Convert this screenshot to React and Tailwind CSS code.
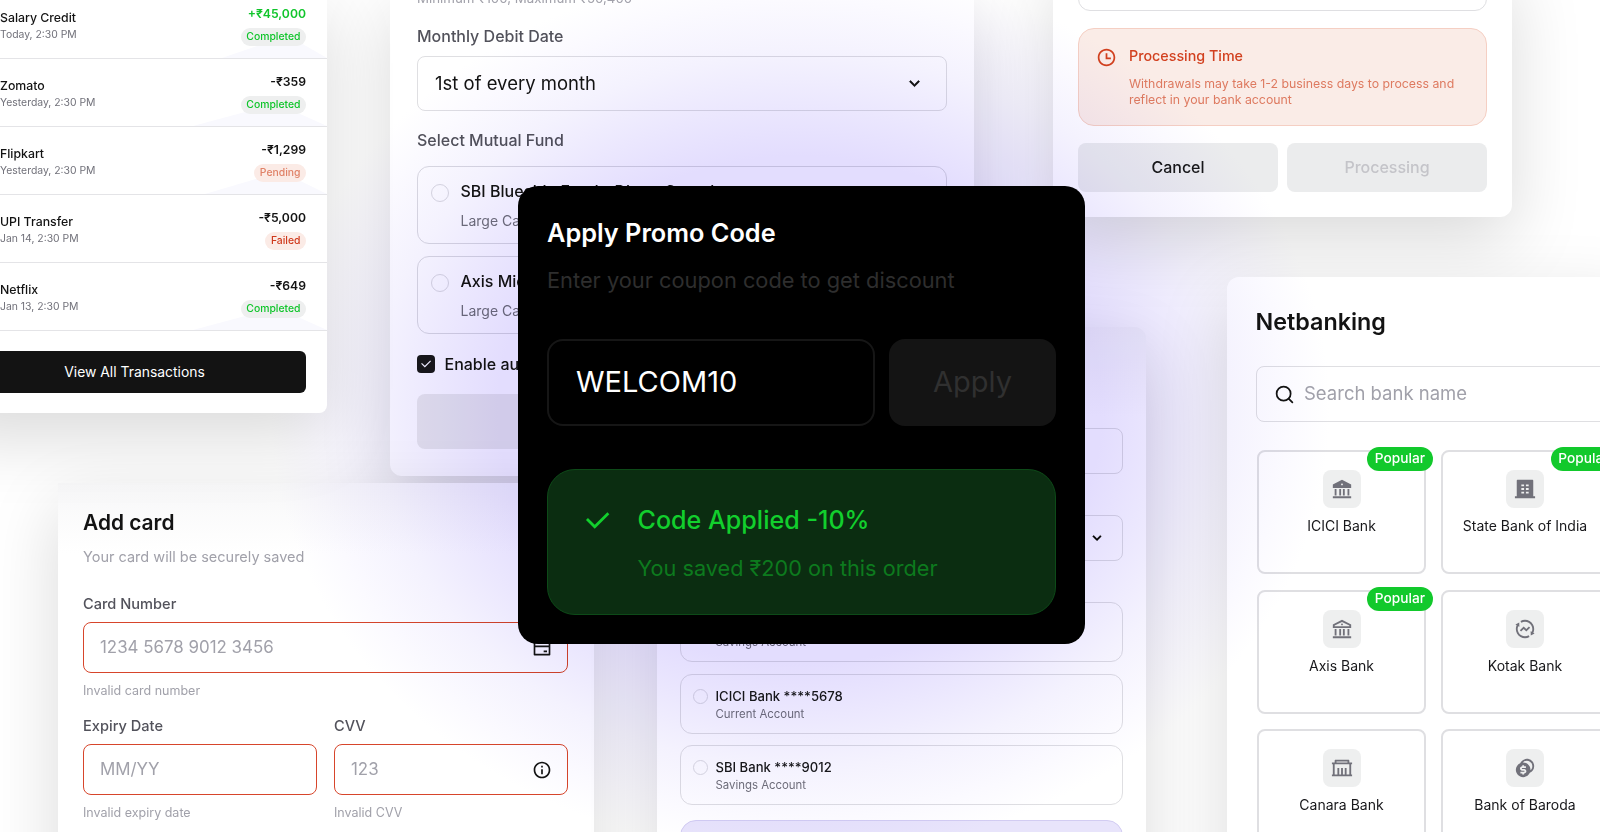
import clsx from 'clsx';
import {
  RiArrowDownSLine,
  RiBankCardLine,
  RiBankFill,
  RiBankLine,
  RiBuilding4Fill,
  RiCheckLine,
  RiCoinsFill,
  RiExchangeFundsLine,
  RiGovernmentLine,
  RiInformationLine,
  RiTimeLine,
} from 'react-icons/ri';
import { Search } from 'lucide-react';

const CARD = 'absolute bg-white shadow-[0_24px_70px_rgba(0,0,0,0.15)]';

const BADGES = {
  Completed: 'bg-[#eeefef] text-[#10c52b]',
  Pending: 'bg-[#fbebe6] text-[#e08268]',
  Failed: 'bg-[#fbebe6] text-[#cf3a1d]',
};

const TRANSACTIONS = [
  { name: 'Salary Credit', date: 'Today, 2:30 PM', amount: '+₹45,000', status: 'Completed', tint: 'w-[105px]' },
  { name: 'Zomato', date: 'Yesterday, 2:30 PM', amount: '-₹359', status: 'Completed', tint: 'w-[134px]' },
  { name: 'Flipkart', date: 'Yesterday, 2:30 PM', amount: '-₹1,299', status: 'Pending', tint: 'w-[122px]' },
  { name: 'UPI Transfer', date: 'Jan 14, 2:30 PM', amount: '-₹5,000', status: 'Failed' },
  { name: 'Netflix', date: 'Jan 13, 2:30 PM', amount: '-₹649', status: 'Completed', tint: 'w-[134px]' },
];

const FUNDS = [
  { name: 'SBI Bluechip Fund - Direct Growth', type: 'Large Cap' },
  { name: 'Axis Midcap Fund - Direct Growth', type: 'Large Cap' },
];

const ACCOUNTS = [
  { name: 'HDFC Bank ****1234', type: 'Savings Account' },
  { name: 'ICICI Bank ****5678', type: 'Current Account' },
  { name: 'SBI Bank ****9012', type: 'Savings Account' },
];

const BANKS = [
  { name: 'ICICI Bank', icon: RiBankFill, popular: true },
  { name: 'State Bank of India', icon: RiBuilding4Fill, popular: true },
  { name: 'Axis Bank', icon: RiBankLine, popular: true },
  { name: 'Kotak Bank', icon: RiExchangeFundsLine },
  { name: 'Canara Bank', icon: RiGovernmentLine },
  { name: 'Bank of Baroda', icon: RiCoinsFill },
];

function TransactionsCard() {
  return (
    <section className={clsx(CARD, 'left-[-58px] top-[-9px] w-[385px] rounded-lg pb-5')}>
      {TRANSACTIONS.map((t) => (
        <div key={t.name} className="relative flex h-[68px] justify-between border-b border-[#e4e4e7] pl-[58px] pr-[21px]">
          {t.tint && (
            <div
              className={clsx(
                'absolute bottom-0 right-0 h-[18px] bg-[#f9f9fe] [clip-path:polygon(0_100%,50%_0,70%_0,100%_100%)]',
                t.tint
              )}
            />
          )}
          <div className="pt-[19px]">
            <p className="text-[12.3px] font-medium leading-4 text-[#131313]">{t.name}</p>
            <p className="mt-px text-[10.4px] leading-4 text-[#71717a]">{t.date}</p>
          </div>
          <div className="relative flex flex-col items-end pt-[15px]">
            <p
              className={clsx(
                'text-[12.2px] font-semibold leading-4',
                t.amount.startsWith('+') ? 'text-[#10c52b]' : 'text-[#131313]'
              )}
            >
              {t.amount}
            </p>
            <span
              className={clsx(
                'mt-[6px] flex h-[17.5px] items-center rounded-full px-[5.5px] text-[10.4px] font-medium',
                BADGES[t.status]
              )}
            >
              {t.status}
            </span>
          </div>
        </div>
      ))}
      <div className="pl-[21px] pr-[21px] pt-5">
        <button className="h-[42px] w-full rounded-md bg-[#131313] text-[13.9px] text-white">View All Transactions</button>
      </div>
    </section>
  );
}

function SipCard() {
  return (
    <section className={clsx(CARD, 'left-[390px] top-[-12px] w-[584px] rounded-xl px-[27px] pb-[27px] text-[#131313]')}>
      <p className="text-[13.3px] leading-5 text-[#a1a1aa]">Minimum ₹100, Maximum ₹50,400</p>
      <p className="mt-[18px] text-[16px] font-medium leading-5 text-[#52525b]">Monthly Debit Date</p>
      <div className="mt-[10px] flex h-[55px] items-center justify-between rounded-lg border border-[#dfdfe2] pl-[17px] pr-[22px] text-[18.5px]">
        1st of every month
        <RiArrowDownSLine className="size-[19px]" stroke="currentColor" strokeWidth="0.8" />
      </div>
      <p className="mt-[19px] text-[16px] font-medium leading-5 text-[#52525b]">Select Mutual Fund</p>
      <div className="mt-4 flex flex-col gap-3">
        {FUNDS.map((f) => (
          <div key={f.name} className="flex h-[78px] gap-[11.5px] rounded-xl border border-[#dbdbe0] pl-[13px] pt-[14px]">
            <span className="mt-[3px] size-[18px] rounded-full border border-[#dbdbe0]" />
            <div>
              <p className="text-[16px] font-medium leading-5">{f.name}</p>
              <p className="mt-[10px] text-[14px] leading-5 text-[#71717a]">{f.type}</p>
            </div>
          </div>
        ))}
      </div>
      <div className="mt-5 flex h-5 items-center gap-[9.5px]">
        <span className="flex size-[18px] items-center justify-center rounded bg-[#18181b]">
          <RiCheckLine className="size-[14px] text-white" />
        </span>
        <p className="text-[16px] font-medium">Enable auto-debit</p>
      </div>
      <div className="mt-5 h-[55px] rounded-lg bg-[#ebebeb]" />
    </section>
  );
}

function WithdrawCard() {
  return (
    <section className={clsx(CARD, 'left-[1053px] top-[-40px] w-[459px] rounded-xl px-[25px] pb-[25px]')}>
      <div className="h-[51px] rounded-xl border border-[#dfdfe2]" />
      <div className="mt-[17px] flex h-[98px] gap-[12px] rounded-2xl border border-[#f5cfc3] bg-[#faece7] pl-[17px] pt-[17px]">
        <RiTimeLine className="mt-px size-[21px] shrink-0 text-[#d2401f]" />
        <div>
          <p className="text-[14.3px] font-medium leading-5 text-[#d2401f]">Processing Time</p>
          <p className="mt-[10px] w-[340px] text-[12.3px] leading-4 text-[#de7a60]">
            Withdrawals may take 1-2 business days to process and reflect in your bank account
          </p>
        </div>
      </div>
      <div className="mt-[17px] grid grid-cols-2 gap-[9px] text-[16px] font-medium">
        <button className="h-[49px] rounded-lg bg-[#ebeced] pb-[2px] text-[#18181b]">Cancel</button>
        <button className="h-[49px] rounded-lg bg-[#ebeced] pb-[2px] text-[#c4c4c9]">Processing</button>
      </div>
    </section>
  );
}

function CardField({ label, placeholder, error, icon: Icon }) {
  return (
    <div>
      <p className="text-[14.6px] font-medium leading-5 text-[#52525b]">{label}</p>
      <div className="mt-[8px] flex h-[51px] items-center justify-between rounded-lg border border-[#d7452b] pl-4 pr-[15px] pt-px text-[16.9px] text-[#a1a1aa]">
        {placeholder}
        {Icon && <Icon className="size-5 text-[#131313]" />}
      </div>
      <p className="mt-[8px] text-[12.5px] leading-5 text-[#a1a1aa]">{error}</p>
    </div>
  );
}

function AddCard() {
  return (
    <section
      className={clsx(
        CARD,
        'left-[58px] top-[483px] h-[420px] w-[536px] rounded-tr-xl bg-[linear-gradient(#f7f7f8,#ffffff_70px)] pl-[25px] pr-[26px] pt-[26px]'
      )}
    >
      <h2 className="text-[20.9px] font-semibold leading-7 text-[#131313]">Add card</h2>
      <p className="mt-[10px] text-[14.5px] leading-5 text-[#a1a1aa]">Your card will be securely saved</p>
      <div className="mt-[27px]">
        <CardField label="Card Number" placeholder="1234 5678 9012 3456" error="Invalid card number" icon={RiBankCardLine} />
      </div>
      <div className="mt-[15px] grid grid-cols-2 gap-[17px]">
        <CardField label="Expiry Date" placeholder="MM/YY" error="Invalid expiry date" />
        <CardField label="CVV" placeholder="123" error="Invalid CVV" icon={RiInformationLine} />
      </div>
    </section>
  );
}

function AccountsCard() {
  return (
    <section
      className={clsx(
        CARD,
        'left-[657px] top-[327px] h-[600px] w-[489px] rounded-xl bg-[linear-gradient(#f4f4f5,#ffffff_90px)] px-[23px] pt-[101px]'
      )}
    >
      <div className="h-[46px] rounded-lg border border-[#dfdfe2]" />
      <div className="mt-[41px] flex h-[46px] items-center justify-end rounded-lg border border-[#dfdfe2] pr-[17px]">
        <RiArrowDownSLine className="size-4" stroke="currentColor" strokeWidth="0.8" />
      </div>
      <div className="mt-[41px] flex flex-col gap-[11.5px]">
        {ACCOUNTS.map((a) => (
          <div key={a.name} className="flex h-[60px] gap-[7.5px] rounded-xl border border-[#dfdfe2] pl-3 pt-[13px]">
            <span className="mt-px size-[15px] rounded-full border border-[#dbdbe0]" />
            <div>
              <p className="text-[13.1px] font-medium leading-4 text-[#18181b]">{a.name}</p>
              <p className="mt-[2px] text-[11.4px] leading-4 text-[#71717a]">{a.type}</p>
            </div>
          </div>
        ))}
      </div>
      <div className="mt-[15px] h-[80px] rounded-2xl border border-[#d2ccf2] bg-[#e8e4fb]" />
    </section>
  );
}

function BankTile({ name, icon: Icon, popular }) {
  return (
    <div className="relative flex h-[124px] flex-col items-center rounded-lg border-2 border-[#dfdfe2] pt-[18px]">
      {popular && (
        <span className="absolute -right-[8.5px] -top-[5px] flex h-6 items-center rounded-full bg-[#12c92c] px-[7.5px] pb-px text-[13.7px] font-medium text-white">
          Popular
        </span>
      )}
      <span className="flex size-[38px] items-center justify-center rounded-lg bg-[#eeefef]">
        <Icon className="size-[22px] text-[#71717a]" />
      </span>
      <p className="mt-[8px] whitespace-nowrap text-[14px] leading-5 text-[#18181b]">{name}</p>
    </div>
  );
}

function NetbankingCard() {
  return (
    <section className={clsx(CARD, 'left-[1227px] top-[277px] h-[640px] w-[412px] rounded-xl px-[28.5px] pt-[29px]')}>
      <h2 className="text-[23.3px] font-semibold leading-8 text-[#131313]">Netbanking</h2>
      <div className="mt-[28px] flex h-[56px] w-[400px] items-center gap-[9px] rounded-lg border border-[#dfdfe2] pl-[17.5px] text-[18.5px] text-[#a1a1aa]">
        <Search className="size-[21px] text-[#131313]" strokeWidth={2} />
        Search bank name
      </div>
      <div className="mt-[28px] ml-[1.5px] grid w-[352.5px] grid-cols-2 gap-x-[14.5px] gap-y-[15.5px]">
        {BANKS.map((b) => (
          <BankTile key={b.name} {...b} />
        ))}
      </div>
    </section>
  );
}

function PromoModal() {
  return (
    <section className="absolute left-[518px] top-[186px] h-[458px] w-[567px] rounded-[20px] bg-black px-[29px] pt-[29px]">
      <h1 className="text-[25.3px] font-semibold leading-9 text-white">Apply Promo Code</h1>
      <p className="mt-[13px] text-[21.8px] leading-8 text-[#2e2e2e]">Enter your coupon code to get discount</p>
      <div className="mt-[43px] flex gap-[14px]">
        <div className="flex h-[87px] w-[328px] items-center rounded-2xl border-2 border-[#161616] pb-[2px] pl-[27px] text-[29px] text-white">
          WELCOM10
        </div>
        <button className="h-[87px] flex-1 rounded-2xl bg-[#141414] pb-[2px] text-[29px] text-[#303030]">Apply</button>
      </div>
      <div className="mt-[43px] flex h-[146px] gap-[23.5px] rounded-[28px] border border-[#0d4a18] bg-[#0b2d11] pl-[33px] pt-[32px]">
        <RiCheckLine className="mt-[2px] size-[33px] text-[#12cf2d]" />
        <div>
          <p className="text-[25.1px] font-medium leading-9 text-[#12cf2d]">Code Applied -10%</p>
          <p className="mt-[14px] text-[21.7px] leading-8 text-[#0d7a1e]">You saved ₹200 on this order</p>
        </div>
      </div>
    </section>
  );
}

export default function App() {
  return (
    <main className="relative h-[832px] w-[1600px] overflow-hidden bg-white font-['Inter',sans-serif]">
      <SipCard />
      <AddCard />
      <AccountsCard />
      <WithdrawCard />
      <NetbankingCard />
      {/* violet glow laid over the cards, under the modal */}
      <div className="pointer-events-none absolute inset-0 bg-[radial-gradient(530px_445px_at_800px_410px,#e3ddfe_57%,#ebe7fe_68%,#f4f2fe_80%,#fbfaff_92%,#ffffff_100%)] mix-blend-multiply" />
      <TransactionsCard />
      <PromoModal />
    </main>
  );
}
